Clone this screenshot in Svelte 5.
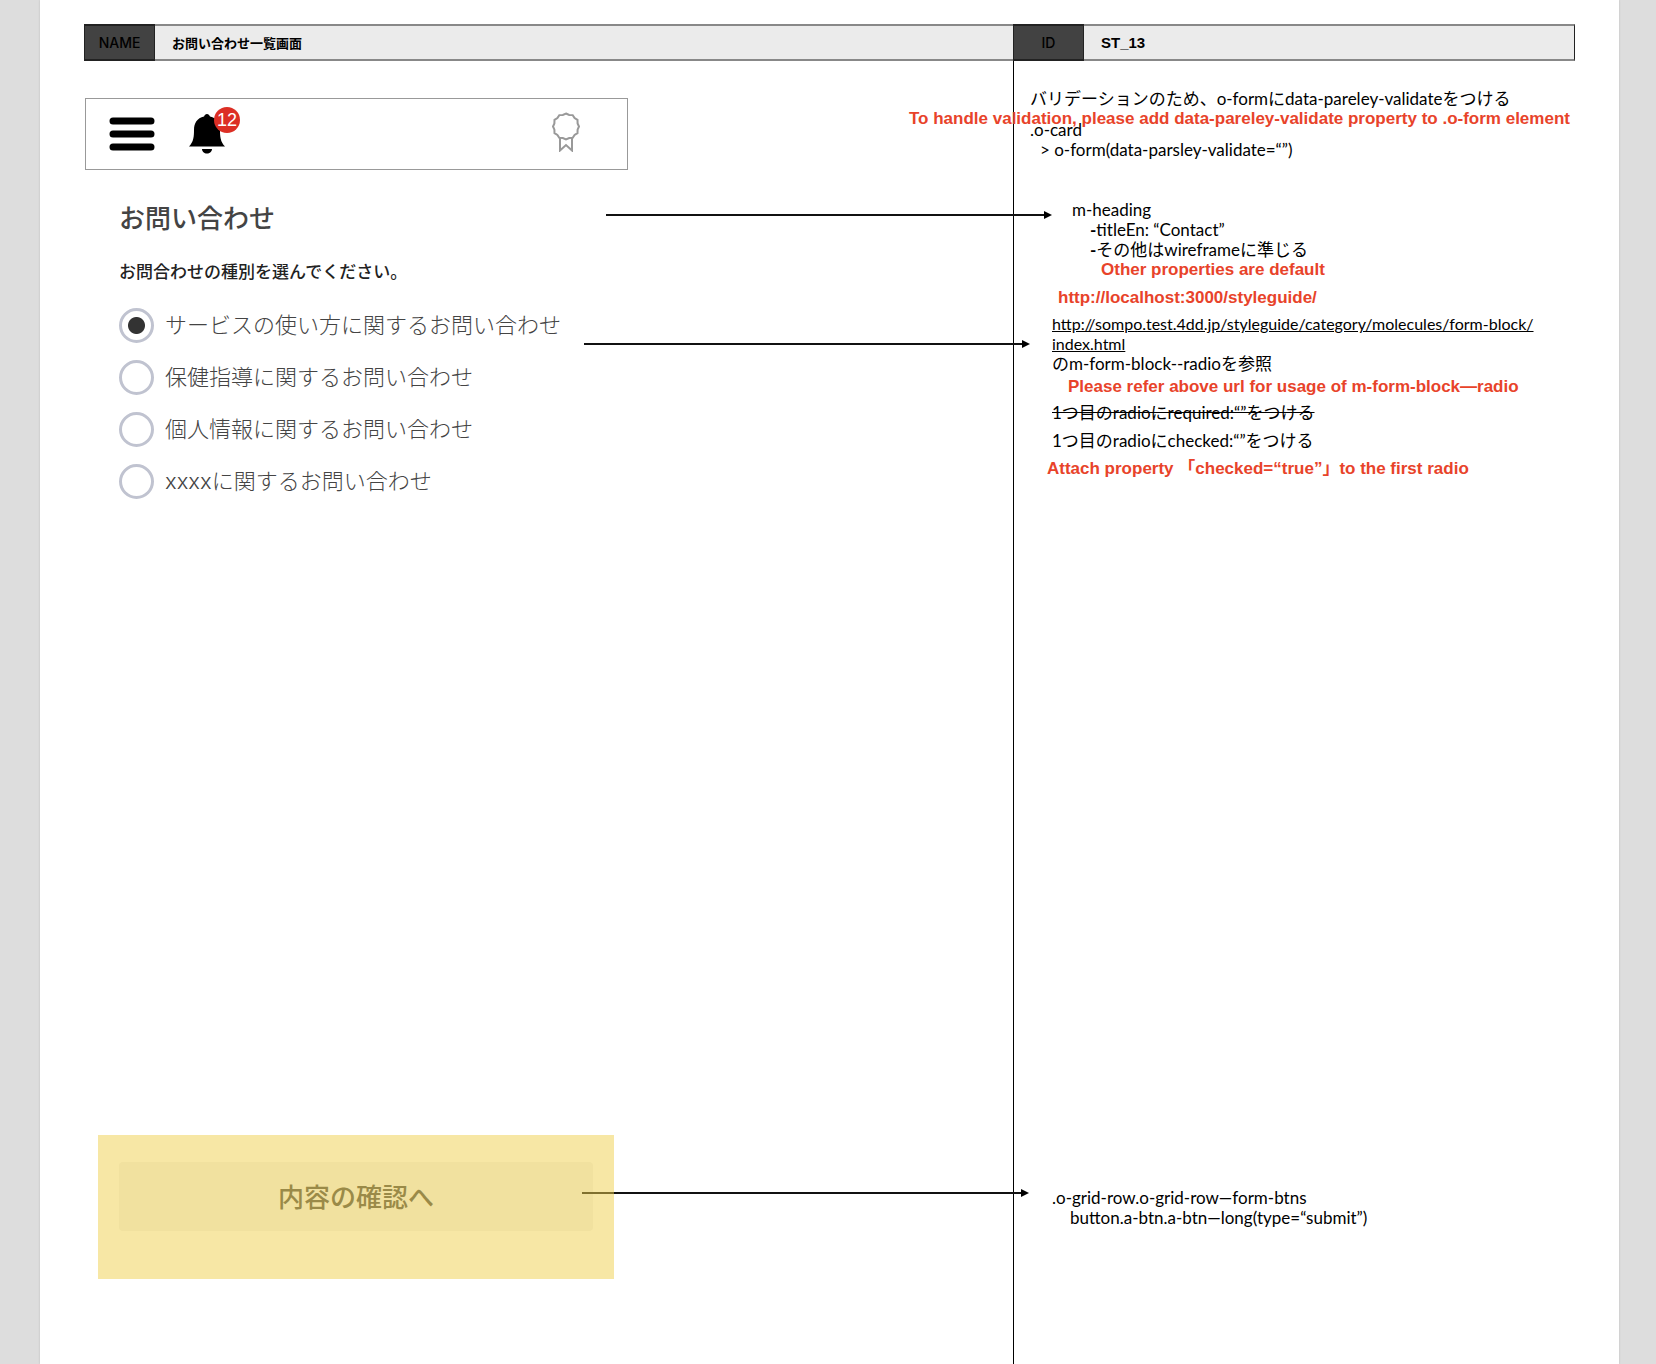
<script>
  const topics = [
    'サービスの使い方に関するお問い合わせ',
    '保健指導に関するお問い合わせ',
    '個人情報に関するお問い合わせ',
    'xxxxに関するお問い合わせ'
  ];
  let selected = $state(0);
</script>

{#snippet arrow(name)}
  <div class="arrow {name}" aria-hidden="true">
    <span class="shaft"></span>
    <svg width="8" height="8" viewBox="0 0 8 8"><path d="M0 0 8 4 0 8z" /></svg>
  </div>
{/snippet}

<div class="sheet">
  <dl class="meta">
    <dt>NAME</dt>
    <dd>お問い合わせ一覧画面</dd>
    <dt>ID</dt>
    <dd class="code">ST_13</dd>
  </dl>

  <div class="columns">
    <main class="mock">
      <nav class="toolbar" aria-label="メニュー">
        <button type="button" class="icon" aria-label="メニューを開く">
          <svg width="46" height="34" viewBox="0 0 46 34">
            <path d="M4 4H42M4 17H42M4 30H42" stroke="#000" stroke-width="7" stroke-linecap="round" />
          </svg>
        </button>
        <button type="button" class="icon bell" aria-label="お知らせ">
          <svg width="36" height="40" viewBox="0 0 36 40">
            <path d="M18 0c1.500 0 2.300 1.200 3 2.400C28 4 31 9 31 16c0 6 .3 12 5 16.500H0C4.700 28 5 22 5 16 5 9 8 4 15 2.400 15.700 1.200 16.500 0 18 0zM13 35h10c0 2.600-2.200 4.600-5 4.600s-5-2-5-4.600z" />
          </svg>
          <span class="badge">12</span>
        </button>
        <button type="button" class="icon medal" aria-label="バッジ">
          <svg width="28" height="40" viewBox="0 0 28 40" fill="none" stroke="#999" stroke-width="2">
            <path d="M14 1.500l3.200 1.400 3.500.2 1.900 2.900 2.900 1.900.1 3.500L27 14.500l-1.400 3.200-.1 3.400-2.900 1.900-1.900 2.900-3.500.2L14 27.500l-3.200-1.400-3.500-.2-1.900-2.900-2.900-1.900-.1-3.400L1 14.500l1.400-3.100.1-3.500L5.400 6l1.900-2.900 3.500-.2z" />
            <path d="M8 26v12.500l6-5.500 6 5.500V26" />
          </svg>
        </button>
      </nav>

      <form class="contact" onsubmit={(e) => e.preventDefault()}>
        <h1>お問い合わせ</h1>
        <fieldset>
          <legend>お問合わせの種別を選んでください。</legend>
          {#each topics as topic, i}
            <label class="choice">
              <input type="radio" name="topic" value={i} bind:group={selected} />
              <span>{topic}</span>
            </label>
          {/each}
        </fieldset>
        <div class="submit-zone">
          <button type="submit">内容の確認へ</button>
        </div>
      </form>

      {@render arrow('to-heading')}
      {@render arrow('to-radio')}
      {@render arrow('to-submit')}
    </main>

    <aside class="notes">
      <section class="validation">
        <p>バリデーションのため、o-formにdata-pareley-validateをつける</p>
        <p class="en over">To handle validation, please add data-pareley-validate property to .o-form element</p>
        <p class="card">.o-card</p>
        <p class="in-1">&gt; o-form(data-parsley-validate=“”)</p>
      </section>

      <section class="heading-note">
        <p>m-heading</p>
        <p class="in-2"><b>-</b>titleEn: “Contact”</p>
        <p class="in-2"><b>-</b>その他はwireframeに準じる</p>
        <p class="en in-3">Other properties are default</p>
      </section>

      <section class="radio-note">
        <p class="en local">http://localhost:3000/styleguide/</p>
        <p><a href="http://sompo.test.4dd.jp/styleguide/category/molecules/form-block/index.html">http://sompo.test.4dd.jp/styleguide/category/molecules/form-block/<br />index.html</a></p>
        <p>のm-form-block--radioを参照</p>
        <p class="en refer">Please refer above url for usage of m-form-block—radio</p>
        <p class="rule"><s>1つ目のradioにrequired:“”をつける</s></p>
        <p class="rule">1つ目のradioにchecked:“”をつける</p>
        <p class="en attach">Attach property 「checked=“true”」to the first radio</p>
      </section>

      <section class="submit-note">
        <p>.o-grid-row.o-grid-row—form-btns</p>
        <p class="in-2">button.a-btn.a-btn—long(type=“submit”)</p>
      </section>
    </aside>
  </div>
</div>

<style>
  :global(body) {
    background: #ddd;
  }

  .sheet {
    box-sizing: border-box;
    display: flex;
    flex-direction: column;
    min-height: 100vh;
    margin: 0 37px 0 40px;
    padding: 24px 44px 0;
    background: #fff;
    box-shadow: 0 0 2px #bbb;
    color: #000;
    font-family: Lato, 'Noto Sans CJK JP', sans-serif;
    font-size: 17px;
    line-height: 20px;
  }

  .meta {
    display: grid;
    grid-template-columns: 71px minmax(0, 858fr) 71px minmax(0, 491fr);
    margin: 0;
    font: 500 13px/33px 'Noto Sans CJK JP', sans-serif;
  }

  .meta dt {
    border: solid #222;
    border-width: 2px 1px;
    background: #424242;
    font-family: Inter, sans-serif;
    font-size: 14px;
    text-align: center;
  }

  .meta dd {
    margin: 0;
    padding-left: 17px;
    border: solid #888;
    border-width: 2px 0;
    background: #ebebeb;
    font-weight: 700;
  }

  .meta .code {
    border-right: 1px solid #222;
    font-family: 'Liberation Sans', sans-serif;
    font-size: 15px;
  }

  .columns {
    flex: 1;
    display: grid;
    grid-template-columns: minmax(0, 929fr) minmax(0, 562fr);
  }

  .mock {
    position: relative;
    display: flex;
    flex-direction: column;
    padding: 37px 0 0 1px;
    font-family: 'Noto Sans CJK JP', sans-serif;
  }

  .toolbar {
    box-sizing: border-box;
    display: flex;
    align-items: center;
    width: 543px;
    max-width: 100%;
    height: 72px;
    padding: 0 47px 0 23px;
    border: 1px solid #999;
  }

  .icon {
    display: flex;
    padding: 0;
    border: 0;
    background: none;
  }

  .bell {
    position: relative;
    margin-left: 34px;
  }

  .badge {
    position: absolute;
    top: -7px;
    right: -15px;
    width: 26px;
    border-radius: 50%;
    background: #dc2f25;
    color: #fff;
    font: 18px/26px 'Liberation Sans', sans-serif;
  }

  .medal {
    margin-left: auto;
    padding-bottom: 4px;
  }

  .contact {
    flex: 1;
    display: flex;
    flex-direction: column;
    padding-left: 34px;
  }

  h1 {
    margin: 29px 0 24px;
    color: #444;
    font-size: 26px;
    font-weight: 500;
    line-height: 36px;
  }

  fieldset {
    display: flex;
    flex-direction: column;
    gap: 16px;
    margin: 0;
    padding: 0;
    border: 0;
  }

  legend {
    margin-bottom: 24px;
    padding: 0;
    color: #222;
    font-size: 17px;
    font-weight: 500;
    line-height: 24px;
  }

  .choice {
    display: flex;
    align-items: center;
    gap: 11px;
    height: 36px;
    color: #444;
    font-family: Inter, 'Noto Sans CJK JP', sans-serif;
    font-size: 22px;
    font-weight: 300;
    line-height: 32px;
  }

  .choice input {
    appearance: none;
    box-sizing: border-box;
    width: 35px;
    height: 35px;
    margin: 0;
    border: 3px solid #c0c3d0;
    border-radius: 50%;
    background: #fff;
  }

  .choice input:checked {
    background: radial-gradient(circle, #333 8px, #fff 9px);
  }

  .submit-zone {
    position: relative;
    z-index: 2;
    box-sizing: border-box;
    width: 516px;
    margin: auto 0 85px -21px;
    padding: 27px 21px 48px;
  }

  .submit-zone::after {
    content: '';
    position: absolute;
    inset: 0;
    background: rgb(240 207 75 / 50%);
    pointer-events: none;
  }

  .submit-zone button {
    width: 100%;
    padding: 15px 16px 17px;
    border: 0;
    border-radius: 4px;
    background: rgb(0 0 20 / 5%);
    color: #444;
    font: 500 26px/37px 'Noto Sans CJK JP', sans-serif;
  }

  .arrow {
    position: absolute;
    z-index: 1;
    display: flex;
    align-items: center;
  }

  .shaft {
    flex: 1;
    height: 2px;
    background: #111;
  }

  .to-heading {
    top: 150px;
    left: 522px;
    right: -39px;
  }

  .to-radio {
    top: 279px;
    left: 500px;
    right: -17px;
  }

  .to-submit {
    bottom: 167px;
    left: 498px;
    right: -16px;
  }

  .notes {
    display: flex;
    flex-direction: column;
    padding: 28px 0 136px 16px;
    border-left: 1px solid #000;
    white-space: nowrap;
  }

  .notes p {
    margin: 0;
  }

  .notes a {
    color: inherit;
    font-size: 16px;
  }

  .notes .en {
    position: relative;
    z-index: 3;
    color: #e8432a;
    font: 700 17px/20px 'Liberation Sans', 'Noto Sans CJK JP', sans-serif;
  }

  .notes .over {
    margin: 0 0 -9px -121px;
  }

  .in-1 {
    padding-left: 10px;
  }

  .in-2 {
    padding-left: 18px;
  }

  .in-3 {
    padding-left: 29px;
  }

  .heading-note {
    margin-top: 40px;
    padding-left: 42px;
  }

  .radio-note {
    margin-top: 8px;
    padding-left: 22px;
  }

  .local {
    padding: 0 0 6px 6px;
  }

  .refer {
    padding: 3px 0 6px 16px;
  }

  .rule {
    padding-bottom: 8px;
  }

  .notes .attach {
    margin-left: -5px;
  }

  .submit-note {
    margin-top: auto;
    padding-left: 22px;
  }
</style>
